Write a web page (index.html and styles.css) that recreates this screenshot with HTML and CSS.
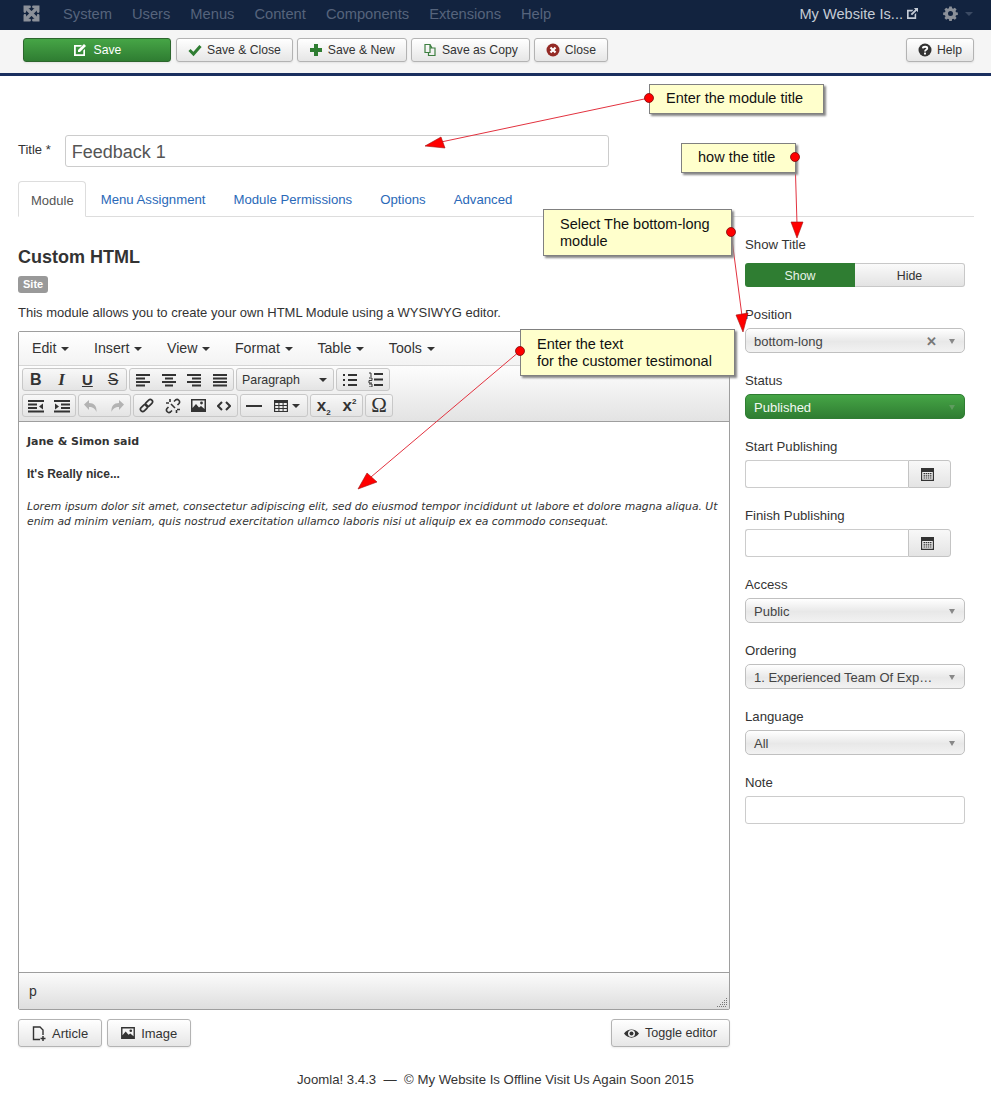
FILE: index.html
```html
<!DOCTYPE html>
<html lang="en">
<head>
<meta charset="utf-8">
<title>Module Manager: Custom HTML</title>
<link rel="stylesheet" href="styles.css">
</head>
<body>
<header class="navbar">
  <svg class="logo" viewBox="0 0 20 20" width="19" height="19"><g fill="none" stroke="#8b9099" stroke-width="3.400" stroke-linecap="round"><path d="M5 5l10 10M15 5L5 15"/><path d="M3 8V3h5M12 3h5v5M17 12v5h-5M8 17H3v-5" stroke-width="2.800"/></g></svg>
  <nav class="nav-items"><span>System</span><span>Users</span><span>Menus</span><span>Content</span><span>Components</span><span>Extensions</span><span>Help</span></nav>
  <div class="nav-right">
    <span class="site-name">My Website Is...</span>
    <svg width="11" height="11" viewBox="0 0 12 12"><path d="M0 2h7L5.500 3.700H1.800v6.500h6.500V7L10 5.500V12H0z" fill="#c5ccd6"/><path d="M4 6.500L9 1.500 7.500 0H12v4.500L10.500 3 5.500 8z" fill="#c5ccd6"/></svg>
    <svg class="gear" width="15" height="15" viewBox="-1 0 18 17"><path fill="#8b9099" fill-rule="evenodd" d="M6.500 0h3l.4 2.200 1.400.6L13.200 1.500l2.100 2.100-1.300 1.900.6 1.400 2.200.4v3l-2.200.4-.6 1.400 1.300 1.900-2.100 2.100-1.900-1.300-1.400.6-.4 2.200h-3l-.4-2.200-1.400-.6-1.900 1.300L.7 14l1.300-1.900-.6-1.400L-.8 10.300v-3l2.200-.4.600-1.400L.7 3.600l2.100-2.100 1.900 1.300 1.400-.6zM8 5.500a3 3 0 100 6 3 3 0 000-6z"/></svg>
    <span class="caret dim"></span>
  </div>
</header>

<div class="toolbar">
  <button class="btn btn-save"><svg width="14" height="14" viewBox="0 0 14 14"><path fill="#fff" d="M1 2h8L7.500 3.700H2.800v7.500h7.500V7.500L12 6v7H1z"/><path fill="#fff" d="M5 7l6-6 2 2-6 6H5z"/></svg>Save</button>
  <button class="btn"><svg width="14" height="14" viewBox="0 0 14 14"><path fill="none" stroke="#2f7d32" stroke-width="3" d="M1.500 7l4 4L12.500 3"/></svg>Save &amp; Close</button>
  <button class="btn"><svg width="14" height="14" viewBox="0 0 14 14"><path fill="#2f7d32" d="M5 1h4v4h4v4H9v4H5V9H1V5h4z"/></svg>Save &amp; New</button>
  <button class="btn"><svg width="14" height="14" viewBox="0 0 14 14"><path fill="none" stroke="#3d7f40" stroke-width="1.200" d="M2 1.500h5v8H2zM7 5h5v7.500H5.500V9.500M7 1.500l2 3.500"/></svg>Save as Copy</button>
  <button class="btn"><svg width="14" height="14" viewBox="0 0 14 14"><circle cx="7" cy="7" r="6.500" fill="#942a25"/><path stroke="#fff" stroke-width="2.200" d="M4.500 4.500l5 5M9.500 4.500l-5 5"/></svg>Close</button>
  <button class="btn btn-help"><svg width="14" height="14" viewBox="0 0 14 14"><circle cx="7" cy="7" r="6.500" fill="#333"/><path fill="none" stroke="#fff" stroke-width="1.800" d="M4.800 5.300C5 3.200 9.300 3.200 9.300 5.300 9.300 6.900 7 6.700 7 8.500"/><rect x="6" y="9.600" width="2" height="1.900" fill="#fff"/></svg>Help</button>
</div>

<main class="content">
  <div class="title-row">
    <label class="title-label">Title *</label>
    <input class="title-input" type="text" value="Feedback 1">
  </div>

  <ul class="tabs">
    <li class="tab active">Module</li>
    <li class="tab">Menu Assignment</li>
    <li class="tab">Module Permissions</li>
    <li class="tab">Options</li>
    <li class="tab">Advanced</li>
  </ul>

  <div class="columns">
    <section class="main-col">
      <h2>Custom HTML</h2>
      <span class="badge">Site</span>
      <p class="desc">This module allows you to create your own HTML Module using a WYSIWYG editor.</p>

      <div class="editor">
        <div class="menubar">
          <span>Edit<i class="caret"></i></span><span>Insert<i class="caret"></i></span><span>View<i class="caret"></i></span><span>Format<i class="caret"></i></span><span>Table<i class="caret"></i></span><span>Tools<i class="caret"></i></span>
        </div>
        <div class="tools">
          <div class="tool-row">
            <div class="group">
              <b class="tb fmt-b">B</b><b class="tb fmt-i">I</b><b class="tb under">U</b><b class="tb strike">S</b>
            </div>
            <div class="group">
              <span class="tb"><svg width="16" height="14" viewBox="0 0 16 14"><path stroke="#333" stroke-width="2" d="M1 2h14M1 5.500h9M1 9h14M1 12.500h9"/></svg></span>
              <span class="tb"><svg width="16" height="14" viewBox="0 0 16 14"><path stroke="#333" stroke-width="2" d="M1 2h14M4 5.500h8M1 9h14M4 12.500h8"/></svg></span>
              <span class="tb"><svg width="16" height="14" viewBox="0 0 16 14"><path stroke="#333" stroke-width="2" d="M1 2h14M6 5.500h9M1 9h14M6 12.500h9"/></svg></span>
              <span class="tb"><svg width="16" height="14" viewBox="0 0 16 14"><path stroke="#333" stroke-width="2" d="M1 2h14M1 5.500h14M1 9h14M1 12.500h14"/></svg></span>
            </div>
            <div class="group format">Paragraph<i class="caret"></i></div>
            <div class="group">
              <span class="tb"><svg width="16" height="14" viewBox="0 0 16 14"><path stroke="#333" stroke-width="2" d="M1 2h2M6 2h9M1 7h2M6 7h9M1 12h2M6 12h9"/></svg></span>
              <span class="tb"><svg width="16" height="15" viewBox="0 0 16 15"><path stroke="#333" stroke-width="2" d="M6 2h9M6 7.500h9M6 13h9"/><path stroke="#333" stroke-width="1" fill="none" d="M1 1h2v4M1 6h3v2.500H1V11h3M1 12h3v3H1"/></svg></span>
            </div>
          </div>
          <div class="tool-row">
            <div class="group">
              <span class="tb"><svg width="16" height="14" viewBox="0 0 16 14"><path stroke="#333" stroke-width="2" d="M0 2h16M0 5.500h9M0 9h9M0 12.500h16"/><path fill="#333" d="M15 4.500v6L11 7.500z"/></svg></span>
              <span class="tb"><svg width="16" height="14" viewBox="0 0 16 14"><path stroke="#333" stroke-width="2" d="M0 2h16M7 5.500h9M7 9h9M0 12.500h16"/><path fill="#333" d="M1 4.500v6L5 7.500z"/></svg></span>
            </div>
            <div class="group muted">
              <span class="tb"><svg width="14" height="14" viewBox="0 0 14 14"><path fill="#b3b3b3" d="M0 5.500L5 1v3c5 0 8 3 7.500 9C11 9.500 9 8 5 8v3z"/></svg></span>
              <span class="tb"><svg width="14" height="14" viewBox="0 0 14 14"><path fill="#b3b3b3" d="M14 5.500L9 1v3C4 4 1 7 1.500 13 3 9.500 5 8 9 8v3z"/></svg></span>
            </div>
            <div class="group">
              <span class="tb"><svg width="15" height="15" viewBox="0 0 15 15"><g fill="none" stroke="#333" stroke-width="1.700"><rect x="7.750" y="1" width="4.500" height="8" rx="2.200" transform="rotate(45 10 5)"/><rect x="2.750" y="6" width="4.500" height="8" rx="2.200" transform="rotate(45 5 10)"/></g></svg></span>
              <span class="tb"><svg width="16" height="16" viewBox="0 0 16 16"><g fill="none" stroke="#333" stroke-width="1.600"><path d="M9 3.500l1.500-1.500a2.500 2.500 0 013.500 3.500L12.500 7M3.500 9L2 10.500A2.500 2.500 0 005.500 14L7 12.500"/><path d="M1 5h3M5 1v3M11.500 12v3M12 11.500h3M6 6l4 4"/></g></svg></span>
              <span class="tb"><svg width="15" height="13" viewBox="0 0 15 13"><path fill="#333" fill-rule="evenodd" d="M0 0h15v13H0zM1.500 1.500V9L5 5l3 3.500L10 7l3.500 3V1.500z"/><circle cx="10.500" cy="4" r="1.400" fill="#333"/></svg></span>
              <span class="tb"><svg width="14" height="10" viewBox="0 0 14 10"><path fill="none" stroke="#333" stroke-width="2" d="M5 1L1 5l4 4M9 1l4 4-4 4"/></svg></span>
            </div>
            <div class="group">
              <span class="tb"><svg width="16" height="4" viewBox="0 0 16 4"><rect width="16" height="2" y="1" fill="#333"/></svg></span>
              <span class="tb tb-wide"><svg width="14" height="12" viewBox="0 0 14 12"><path fill="#333" fill-rule="evenodd" d="M0 0h14v12H0zM1.200 3v2h3.200V3zM5.400 3v2h3.200V3zM9.600 3v2h3.200V3zM1.200 6v2h3.200V6zM5.400 6v2h3.200V6zM9.600 6v2h3.200V6zM1.200 9v2h3.200V9zM5.400 9v2h3.200V9zM9.600 9v2h3.200V9z"/></svg><i class="caret"></i></span>
            </div>
            <div class="group">
              <span class="tb script">x<sub>2</sub></span>
              <span class="tb script">x<sup>2</sup></span>
            </div>
            <div class="group">
              <span class="tb omega">Ω</span>
            </div>
          </div>
        </div>
        <div class="edit-area">
          <p class="ed-head">Jane &amp; Simon said</p>
          <p class="ed-sub">It's Really nice...</p>
          <p class="ed-body">Lorem ipsum dolor sit amet, consectetur adipiscing elit, sed do eiusmod tempor incididunt ut labore et dolore magna aliqua. Ut enim ad minim veniam, quis nostrud exercitation ullamco laboris nisi ut aliquip ex ea commodo consequat.</p>
        </div>
        <div class="statusbar">
          <span>p</span>
          <svg class="grip" width="10" height="10" viewBox="0 0 10 10"><path stroke="#777" stroke-dasharray="1 1" d="M0 9.500h10M3 7.500h7M5 5.500h5M7 3.500h3M9 1.500h1"/></svg>
        </div>
      </div>

      <div class="editor-actions">
        <button class="btn btn-tall"><svg width="14" height="15" viewBox="0 0 14 15"><path fill="none" stroke="#333" stroke-width="1.400" d="M8 13.500H1.500V1H8l3 3v5"/><path stroke="#333" stroke-width="1.500" d="M11 10v5M8.500 12.500h5"/></svg>Article</button>
        <button class="btn btn-tall"><svg width="14" height="12" viewBox="0 0 15 13"><path fill="#333" fill-rule="evenodd" d="M0 0h15v13H0zM1.500 1.500V9L5 5l3 3.500L10 7l3.500 3V1.500z"/><circle cx="10.500" cy="4" r="1.400" fill="#333"/></svg>Image</button>
        <button class="btn btn-tall btn-toggle"><svg width="15" height="11" viewBox="0 0 15 11"><path fill="#333" fill-rule="evenodd" d="M0 5.500C3.500 0 11.500 0 15 5.500 11.500 11 3.500 11 0 5.500zM7.500 2a3.500 3.500 0 100 7 3.500 3.500 0 000-7z"/><circle cx="7.500" cy="5.500" r="2" fill="#333"/></svg>Toggle editor</button>
      </div>
    </section>

    <aside class="side">
      <div class="field">
        <label class="first">Show Title</label>
        <div class="switch"><span class="on">Show</span><span class="off">Hide</span></div>
      </div>
      <div class="field">
        <label>Position</label>
        <div class="select"><span>bottom-long</span><b class="clear">✕</b><i class="arrow"></i></div>
      </div>
      <div class="field">
        <label>Status</label>
        <div class="select select-green"><span>Published</span><i class="arrow"></i></div>
      </div>
      <div class="field">
        <label>Start Publishing</label>
        <div class="date"><input type="text"><span class="cal"><svg width="13" height="13" viewBox="0 0 13 13"><path fill="#333" fill-rule="evenodd" d="M0 0h13v13H0zM1.200 4v7.800h10.600V4z"/><path stroke="#333" stroke-width="1.200" d="M2.500 5.600h8M2.500 7.800h8M2.500 10h8"/><path stroke="#eee" stroke-width=".6" d="M4.500 5v6M6.500 5v6M8.500 5v6"/></svg></span></div>
      </div>
      <div class="field">
        <label>Finish Publishing</label>
        <div class="date"><input type="text"><span class="cal"><svg width="13" height="13" viewBox="0 0 13 13"><path fill="#333" fill-rule="evenodd" d="M0 0h13v13H0zM1.200 4v7.800h10.600V4z"/><path stroke="#333" stroke-width="1.200" d="M2.500 5.600h8M2.500 7.800h8M2.500 10h8"/><path stroke="#eee" stroke-width=".6" d="M4.500 5v6M6.500 5v6M8.500 5v6"/></svg></span></div>
      </div>
      <div class="field">
        <label>Access</label>
        <div class="select"><span>Public</span><i class="arrow"></i></div>
      </div>
      <div class="field">
        <label>Ordering</label>
        <div class="select"><span class="trunc">1. Experienced Team Of Experts</span><i class="arrow"></i></div>
      </div>
      <div class="field">
        <label>Language</label>
        <div class="select"><span>All</span><i class="arrow"></i></div>
      </div>
      <div class="field">
        <label>Note</label>
        <input class="note" type="text">
      </div>
    </aside>
  </div>
</main>

<footer class="footer">Joomla! 3.4.3 &nbsp;—&nbsp; © My Website Is Offline Visit Us Again Soon 2015</footer>

<svg class="arrows" width="991" height="1104" viewBox="0 0 991 1104">
  <g stroke="#e2323f" stroke-width="1" fill="none">
    <path d="M649 98L441 142"/>
    <path d="M795 157L797 224"/>
    <path d="M731 232L742 316"/>
    <path d="M520 351L371 477"/>
  </g>
  <g fill="#f00" stroke="#a01010" stroke-width=".6">
    <path d="M425 146L441 137 445 148z"/>
    <path d="M797 238L791 222 803 222z"/>
    <path d="M743 332L736 315 748 313z"/>
    <path d="M358 489L367 473 377 482z"/>
  </g>
</svg>
<div class="note-box nb1">Enter the module title</div>
<div class="note-box nb2">how the title</div>
<div class="note-box nb3">Select The bottom-long<br>module</div>
<div class="note-box nb4">Enter the text<br>for the customer testimonal</div>
<svg class="arrows dots" width="991" height="1104" viewBox="0 0 991 1104">
  <g fill="#f00" stroke="#7a0a0a" stroke-width=".8">
    <circle cx="649" cy="98" r="4.500"/>
    <circle cx="795" cy="157" r="4.500"/>
    <circle cx="731" cy="232" r="4.500"/>
    <circle cx="520" cy="351" r="4.500"/>
  </g>
</svg>
</body>
</html>
```

FILE: styles.css
```css
* { box-sizing: border-box; }
html, body { margin: 0; padding: 0; }
body {
  position: relative;
  width: 991px;
  height: 1104px;
  overflow: hidden;
  background: #fff;
  color: #333;
  font-family: "Liberation Sans", Arial, sans-serif;
  font-size: 13px;
}

.caret {
  display: inline-block;
  width: 0;
  height: 0;
  margin-left: 6px;
  vertical-align: middle;
  border-left: 4px solid transparent;
  border-right: 4px solid transparent;
  border-top: 4px solid #333;
}

/* Top bar */
.navbar {
  display: flex;
  align-items: center;
  height: 30px;
  padding: 0 0 3px 22px;
  background: #12233f;
  font-size: 14.700px;
}
.logo { flex: none; }
.nav-items {
  display: flex;
  gap: 20px;
  margin-left: 22px;
  color: #56647c;
}
.nav-right {
  display: flex;
  align-items: center;
  margin-left: auto;
  padding-right: 18px;
  color: #c5ccd6;
  font-size: 14.600px;
}
.site-name { margin-right: 4px; }
.gear { margin-left: 25px; }
.caret.dim { border-top-color: #3b4a63; margin-left: 7px; }

/* Action toolbar */
.toolbar {
  display: flex;
  gap: 4px;
  height: 46px;
  padding: 8px 17px 0 23px;
  background: #f5f5f5;
  border-bottom: 3px solid #1a2f5f;
}
.btn {
  display: inline-flex;
  align-items: center;
  justify-content: center;
  gap: 5px;
  height: 24px;
  padding: 0 11px;
  background: linear-gradient(#fff, #e6e6e6);
  border: 1px solid #b3b3b3;
  border-radius: 3px;
  box-shadow: 0 1px 2px rgba(0,0,0,.08);
  color: #333;
  font-family: inherit;
  font-size: 12.200px;
}
.btn-save {
  width: 148px;
  gap: 7px;
  margin-right: 1px;
  background: linear-gradient(#46a546, #2f7d32);
  border-color: #2c662d;
  color: #fff;
}
.btn-help { margin-left: auto; }
.btn-tall { gap: 6px; height: 28px; font-size: 13px; padding: 0 13px; }
.btn-toggle { margin-left: auto; padding: 0 12px; font-size: 12.600px; }

/* Title */
.content { padding: 0 17px 0 18px; }
.title-row {
  display: flex;
  align-items: flex-start;
  gap: 14px;
  padding-top: 59px;
}
.title-label { padding-top: 7px; font-size: 13px; }
.title-input {
  width: 544px;
  height: 32px;
  padding: 2px 6px 0;
  border: 1px solid #ccc;
  border-radius: 3px;
  color: #555;
  font-family: inherit;
  font-size: 18px;
}

/* Tabs */
.tabs {
  display: flex;
  height: 36px;
  margin: 14px 0 0;
  padding: 0;
  list-style: none;
  border-bottom: 1px solid #ddd;
}
.tab {
  padding: 10.500px 14px 0;
  color: #2a69b8;
  font-size: 13.200px;
  line-height: 16px;
}
.tab.active {
  height: 36px;
  padding: 10.500px 11px 0 12px;
  margin-right: 1px;
  background: #fff;
  border: 1px solid #ddd;
  border-bottom-color: #fff;
  border-radius: 4px 4px 0 0;
  color: #555;
  font-size: 13px;
}

.columns { display: flex; gap: 15px; }
.main-col { width: 712px; padding-top: 29px; }
h2 {
  margin: 0;
  color: #333;
  font-size: 18px;
  line-height: 22px;
}
.badge {
  display: inline-block;
  margin-top: 8px;
  padding: 0 5px;
  background: #999;
  border-radius: 3px;
  color: #fff;
  font-size: 11px;
  font-weight: bold;
  line-height: 17px;
}
.desc { margin: 11px 0 0; font-size: 13px; line-height: 18px; }

/* Editor */
.editor {
  margin-top: 9px;
  border: 1px solid #9e9e9e;
  border-radius: 2px;
}
.menubar {
  display: flex;
  gap: 24.500px;
  height: 34px;
  padding: 0 13px 2px;
  align-items: center;
  background: linear-gradient(#fff, #f3f3f3);
  border-bottom: 1px solid #d5d5d5;
  font-size: 14.200px;
}
.menubar .caret { margin-left: 5px; }
.tools {
  height: 56px;
  padding: 2px 3px 0;
  background: linear-gradient(#fdfdfd, #e3e3e3);
  border-bottom: 1px solid #9e9e9e;
}
.tool-row { display: flex; gap: 2px; margin-bottom: 3px; height: 23px; }
.group {
  display: flex;
  align-items: center;
  background: linear-gradient(#f8f8f8, #e4e4e4);
  border: 1px solid #c8c8c8;
  border-radius: 3px;
}
.tb {
  display: flex;
  align-items: center;
  justify-content: center;
  width: 25.750px;
  height: 100%;
  color: #333;
  font-size: 15px;
}
.tb-wide { width: 40px; }
.tb-wide .caret { margin-left: 4px; }
.fmt-b { font-size: 16px; }
.fmt-i { font-family: "Liberation Serif", serif; font-style: italic; font-size: 17px; }
.under { text-decoration: underline; }
.strike { text-decoration: line-through; font-weight: normal; font-size: 16px; }
.format {
  justify-content: space-between;
  width: 98px;
  padding: 0 6px 0 5px;
  font-size: 12.400px;
}
.script { display: block; font-size: 17px; font-weight: bold; line-height: 21px; text-align: center; }
.script sub, .script sup { font-size: 8px; font-weight: bold; line-height: 0; }
.omega { font-family: "Liberation Serif", serif; font-size: 21px; }
.edit-area {
  height: 551px;
  padding: 13px 8px;
  background: #fff;
  border-bottom: 1px solid #9e9e9e;
  font-family: "DejaVu Sans", Verdana, sans-serif;
  font-size: 10.800px;
  color: #333;
}
.edit-area p { margin: 0; }
.ed-head { font-weight: bold; line-height: 14px; font-size: 11px; }
.edit-area .ed-sub {
  margin-top: 18px;
  font-family: "Liberation Sans", Arial, sans-serif;
  font-size: 12px;
  font-weight: bold;
  line-height: 14px;
}
.edit-area .ed-body { margin-top: 18px; font-style: italic; line-height: 15px; }
.statusbar {
  display: flex;
  justify-content: space-between;
  align-items: flex-end;
  height: 36px;
  padding: 1px 2px 2px 10px;
  background: linear-gradient(#fbfbfb, #dedede);
  font-size: 14px;
}
.statusbar span { align-self: center; }
.editor-actions { display: flex; gap: 5px; margin-top: 9px; }

/* Sidebar */
.side { width: 220px; padding-top: 19px; }
.field { margin-bottom: 19px; }
.field label {
  display: block;
  height: 16px;
  margin-bottom: 6px;
  font-size: 13.200px;
  line-height: 18px;
}
.field label.first { margin-bottom: 11px; }
.switch {
  display: flex;
  height: 24px;
  border-radius: 3px;
  line-height: 26px;
  text-align: center;
  font-size: 12.400px;
}
.switch .on {
  width: 110px;
  background: #2f7d32;
  border-radius: 3px 0 0 3px;
  color: #e8f3e8;
}
.switch .off {
  flex: 1;
  background: linear-gradient(#fafafa, #e3e3e3);
  border: 1px solid #c8c8c8;
  border-left: 0;
  border-radius: 0 3px 3px 0;
  line-height: 24px;
}
.select {
  display: flex;
  align-items: center;
  height: 25px;
  padding: 1px 9px 0 8px;
  background: linear-gradient(#fff 0, #e8e8e8 55%, #f2f2f2 100%);
  border: 1px solid #c0c0c0;
  border-radius: 5px;
  font-size: 13px;
  color: #444;
}
.select span { flex: 1; min-width: 0; }
.trunc { overflow: hidden; white-space: nowrap; text-overflow: ellipsis; padding-right: 14px; }
.clear { margin-right: 12px; color: #777; font-size: 13px; }
.arrow {
  width: 0;
  height: 0;
  border-left: 3.500px solid transparent;
  border-right: 3.500px solid transparent;
  border-top: 5px solid #888;
}
.select-green {
  background: linear-gradient(#46a546, #2f7d32);
  border-color: #2f7d32;
  color: #f2f8f2;
}
.select-green .arrow { border-top-color: #5f9c5f; }
.date { display: flex; width: 206px; height: 28px; }
.date input {
  width: 163px;
  border: 1px solid #ccc;
  border-right: 0;
  border-radius: 3px 0 0 3px;
}
.cal {
  display: flex;
  align-items: center;
  justify-content: center;
  flex: 1;
  padding-right: 4px;
  background: linear-gradient(#f8f8f8, #e4e4e4);
  border: 1px solid #c4c4c4;
  border-radius: 0 3px 3px 0;
}
.note {
  display: block;
  width: 100%;
  height: 28px;
  border: 1px solid #ccc;
  border-radius: 3px;
}

.footer {
  padding-top: 25px;
  padding-left: 297px;
  color: #333;
  font-size: 13.200px;
  line-height: 16px;
}

/* Annotation overlay */
.arrows { position: absolute; left: 0; top: 0; pointer-events: none; }
.note-box {
  position: absolute;
  background: #ffffcc;
  border: 1px solid #808080;
  box-shadow: 2px 2px 2px #888;
  color: #111;
  font-size: 14.500px;
  line-height: 17px;
}
.nb1 { left: 649px; top: 84px; width: 175px; height: 30px; padding: 5px 0 0 16px; }
.nb2 { left: 681px; top: 143px; width: 115px; height: 30px; padding: 5px 0 0 16px; }
.nb3 { left: 543px; top: 209px; width: 189px; height: 47px; padding: 6px 0 0 16px; }
.nb4 { left: 520px; top: 329px; width: 215px; height: 47px; padding: 6px 0 0 16px; }
```
